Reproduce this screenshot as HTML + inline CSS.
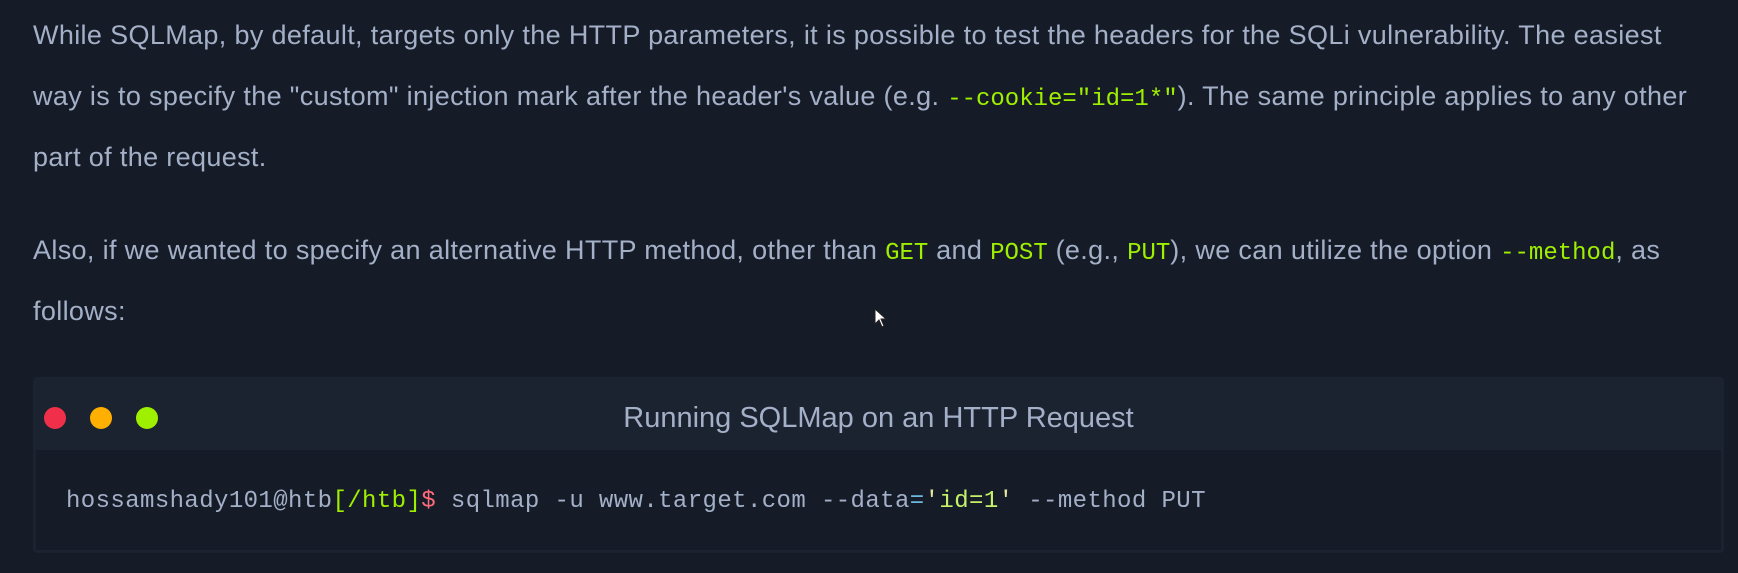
<!DOCTYPE html>
<html><head><meta charset="utf-8"><style>
html,body{margin:0;padding:0;width:1738px;height:573px;overflow:hidden;background:#151c27;}
.p{position:absolute;left:33px;font-family:"Liberation Sans",sans-serif;font-size:27px;letter-spacing:0.35px;color:#a4b0c8;line-height:61px;white-space:nowrap;}
.p div{height:61px;}
code{font-family:"Liberation Mono",monospace;color:#9fef00;font-size:24px;letter-spacing:0;}
.term{position:absolute;left:33px;top:377px;width:1691px;height:176px;background:#1b2230;border-radius:4px;}
.hdr{height:73px;position:relative;}
.dot{position:absolute;top:30px;width:22px;height:22px;border-radius:50%;}
.title{position:absolute;left:0;right:0;top:3px;line-height:76px;text-align:center;font-family:"Liberation Sans",sans-serif;font-size:29px;color:#a4b0c8;}
.body{position:absolute;left:3px;right:3px;top:73px;bottom:3px;background:#151c28;}
.cmd{position:absolute;left:30px;top:38px;font-family:"Liberation Mono",monospace;font-size:24px;letter-spacing:0.4px;color:#a4b0c8;white-space:nowrap;}
</style></head><body>
<div class="p" style="top:5px">
<div>While SQLMap, by default, targets only the HTTP parameters, it is possible to test the headers for the SQLi vulnerability. The easiest</div>
<div>way is to specify the "custom" injection mark after the header's value (e.g. <code>--cookie="id=1*"</code>). The same principle applies to any other</div>
<div>part of the request.</div>
</div>
<div class="p" style="top:220px">
<div>Also, if we wanted to specify an alternative HTTP method, other than <code>GET</code> and <code>POST</code> (e.g., <code>PUT</code>), we can utilize the option <code>--method</code>, as</div>
<div>follows:</div>
</div>
<svg style="position:absolute;left:874px;top:308px" width="14" height="20" viewBox="0 0 14 20"><path d="M1 1 L1 16 L5 12 L8 19 L10 18 L7 11 L12 11 Z" fill="#fff" stroke="#222" stroke-width="1"/></svg>
<div class="term">
<div class="hdr">
<div class="dot" style="left:11px;background:#f0304a"></div>
<div class="dot" style="left:57px;background:#ffaf00"></div>
<div class="dot" style="left:103px;background:#9fef00"></div>
<div class="title">Running SQLMap on an HTTP Request</div>
</div>
<div class="body"><div class="cmd">hossamshady101@htb<span style="color:#9fef00">[/htb]</span><span style="color:#ff6b7a">$</span> sqlmap -u www.target.com --data<span style="color:#6cb8e0">=</span><span style="color:#e6e6a0">'</span><span style="color:#c5f06a">id=1</span><span style="color:#e6e6a0">'</span> --method PUT</div></div>
</div>
</body></html>
